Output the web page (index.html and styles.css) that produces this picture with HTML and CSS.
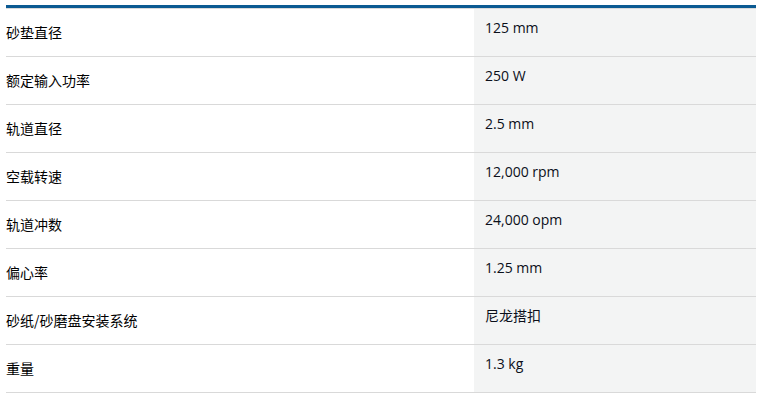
FILE: index.html
```html
<!DOCTYPE html>
<html lang="zh">
<head>
<meta charset="utf-8">
<link rel="stylesheet" href="styles.css">
</head>
<body>
<div class="specs">
  <div class="row"><div class="label">砂垫直径</div><div class="value">125 mm</div></div>
  <div class="row"><div class="label">额定输入功率</div><div class="value">250 W</div></div>
  <div class="row"><div class="label">轨道直径</div><div class="value">2.5 mm</div></div>
  <div class="row"><div class="label">空载转速</div><div class="value">12,000 rpm</div></div>
  <div class="row"><div class="label">轨道冲数</div><div class="value">24,000 opm</div></div>
  <div class="row"><div class="label">偏心率</div><div class="value">1.25 mm</div></div>
  <div class="row"><div class="label">砂纸/砂磨盘安装系统</div><div class="value">尼龙搭扣</div></div>
  <div class="row"><div class="label">重量</div><div class="value">1.3 kg</div></div>
</div>
</body>
</html>
```
FILE: styles.css
```css
html, body {
  margin: 0;
  padding: 0;
  background: #ffffff;
}
body {
  padding: 5px 9px 0 6px;
  font-family: "Open Sans", "Noto Sans CJK SC", sans-serif;
  font-size: 14px;
  color: #000000;
}
.specs {
  border-top: 3px solid #0b5a92;
}
.row {
  display: grid;
  grid-template-columns: 468px 1fr;
  border-top: 1px solid #d9d9d9;
  min-height: 47px;
}
.label {
  font-family: "Noto Sans CJK SC", "Open Sans", sans-serif;
  display: flex;
  align-items: center;
  line-height: 20px;
  padding-bottom: 2px;
}
.value {
  background: #f3f4f4;
  padding: 9px 11px 0;
  line-height: 20px;
  color: #0b0f1a;
  font-family: "Open Sans", "Noto Sans CJK SC", sans-serif;
}
.row:last-child {
  border-bottom: 1px solid #d9d9d9;
}
```
